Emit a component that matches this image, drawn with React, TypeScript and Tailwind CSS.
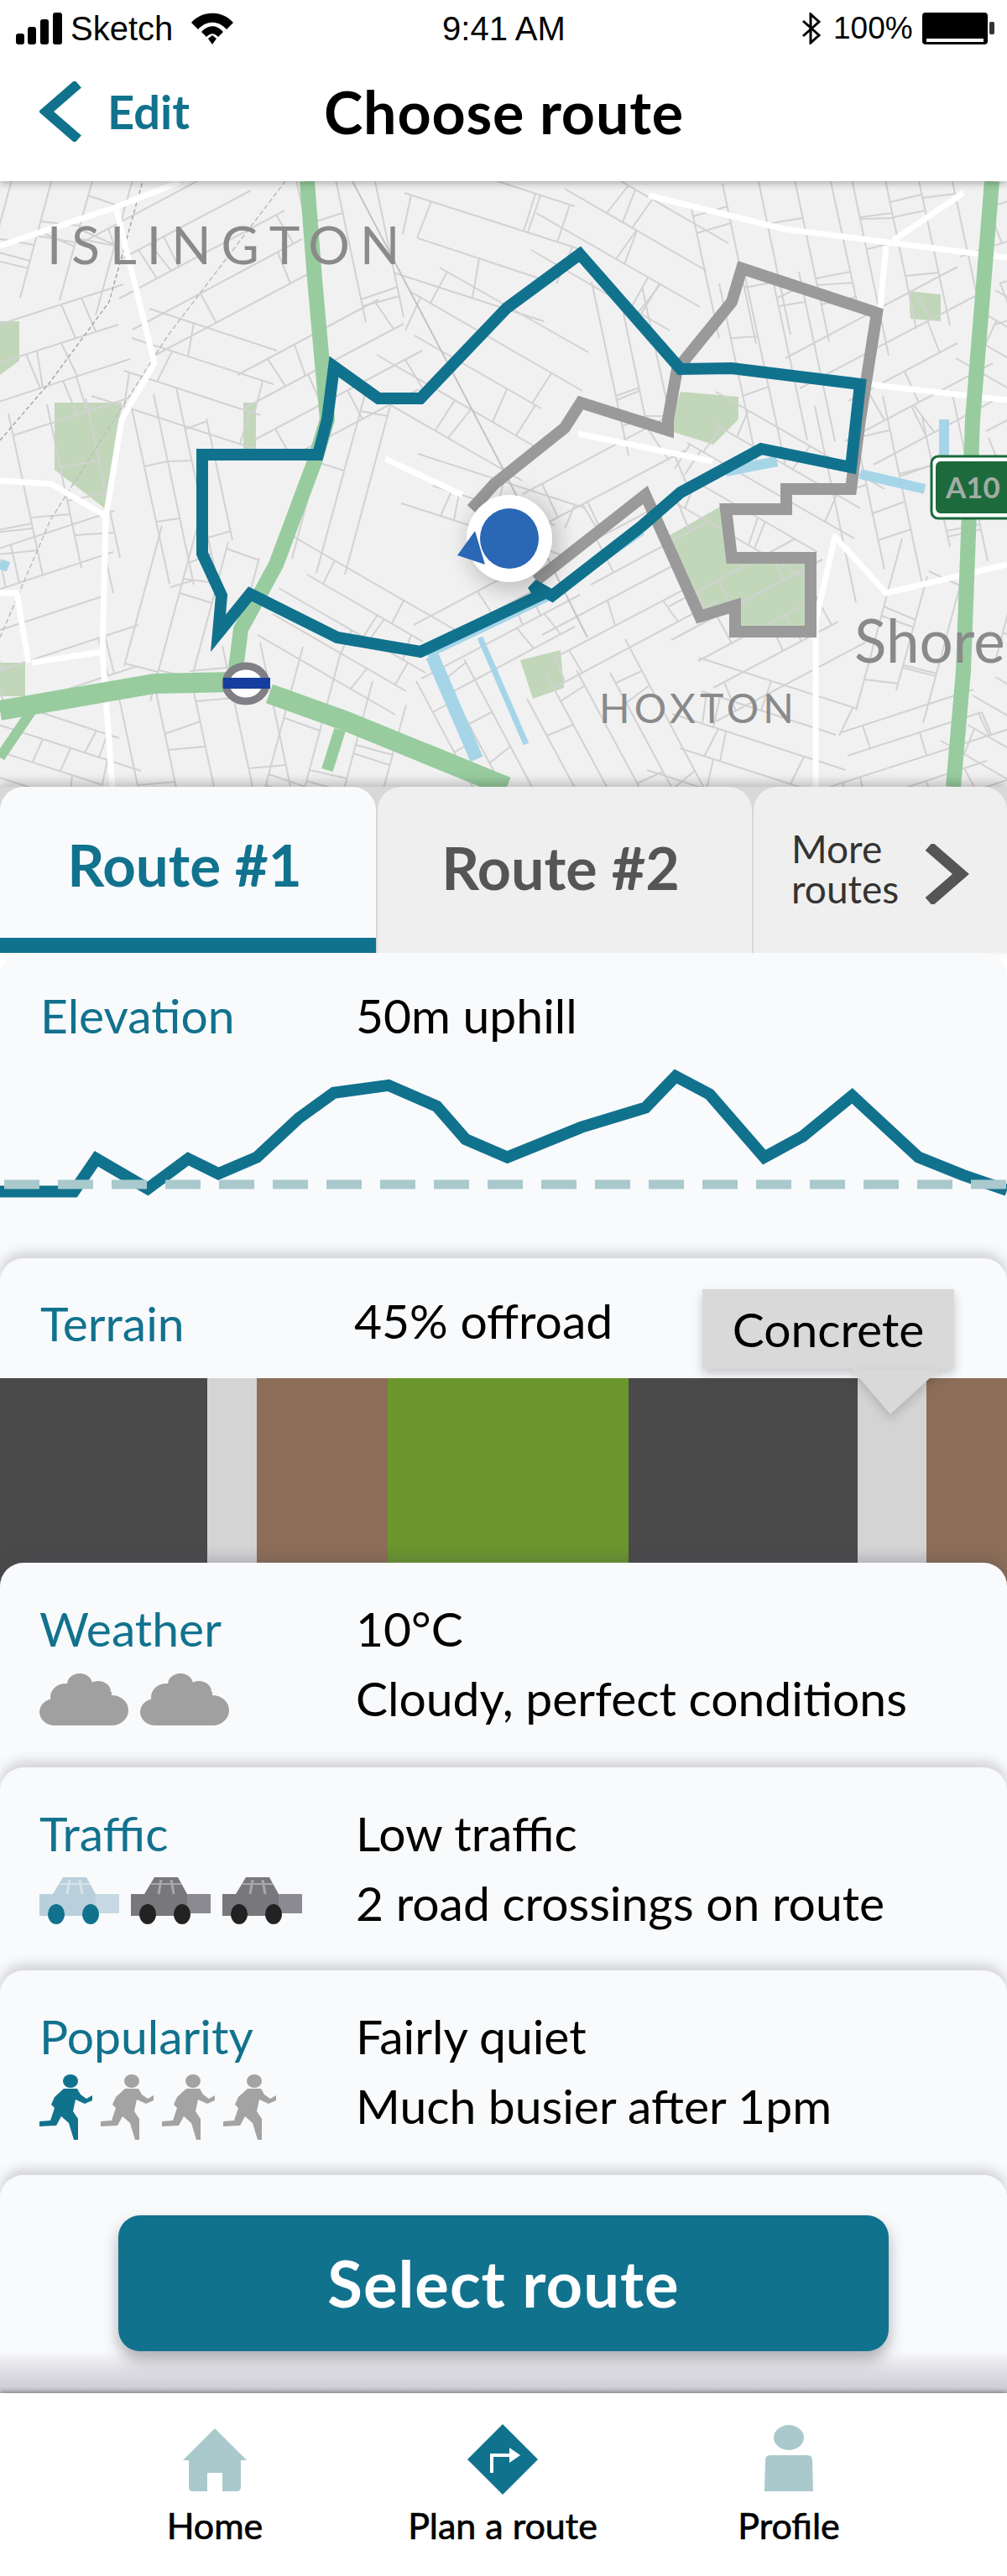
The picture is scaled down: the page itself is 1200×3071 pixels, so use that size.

import React from "react";

const TEAL = "#11728e";
const LIGHT = "#a9c9cd";

function rngFactory(seed: number) {
  let s = seed;
  return () => {
    s = (s * 1664525 + 1013904223) % 4294967296;
    return s / 4294967296;
  };
}

const streets: string[] = (() => {
  const r = rngFactory(98765);
  const angles = [-28, 62, 18, 78, 105, -18, 68, 30];
  const out: string[] = [];
  const cw = 170;
  const ch = 150;
  for (let cy = 216; cy < 938; cy += ch) {
    for (let cx = -20; cx < 1200; cx += cw) {
      const th = (angles[Math.floor(r() * angles.length)] * Math.PI) / 180;
      const ux = Math.cos(th);
      const uy = Math.sin(th);
      const vx = -uy;
      const vy = ux;
      const mx = cx + cw / 2 + (r() - 0.5) * 30;
      const my = cy + ch / 2 + (r() - 0.5) * 30;
      const n = 3 + Math.floor(r() * 3);
      const gap = 26 + r() * 22;
      for (let i = 0; i < n; i++) {
        const off = (i - (n - 1) / 2) * gap;
        const half = 70 + r() * 50;
        const ax = mx + vx * off - ux * half;
        const ay = my + vy * off - uy * half;
        const bx = mx + vx * off + ux * half;
        const by = my + vy * off + uy * half;
        out.push(`M${ax.toFixed(0)} ${ay.toFixed(0)}L${bx.toFixed(0)} ${by.toFixed(0)}`);
        if (i < n - 1) {
          const k = 1 + Math.floor(r() * 3);
          for (let j = 0; j < k; j++) {
            const t = (r() - 0.5) * 2 * half;
            const sx = mx + vx * off + ux * t;
            const sy = my + vy * off + uy * t;
            const skew = (r() - 0.5) * 14;
            out.push(
              `M${sx.toFixed(0)} ${sy.toFixed(0)}L${(sx + vx * gap + ux * skew).toFixed(0)} ${(sy + vy * gap + uy * skew).toFixed(0)}`
            );
          }
        }
      }
    }
  }
  return out;
})();

function MapDrawing() {
  return (
    <svg viewBox="0 216 1200 722" className="block w-full h-full">
      <rect x="0" y="216" width="1200" height="722" fill="#f1f1f2" />
      <g fill="#c2d7b9">
        <polygon points="65,480 145,480 130,610 65,560" />
        <polygon points="795,640 865,600 865,665 966,665 966,753 876,753 876,722 834,735" />
        <polygon points="811,467 880,473 880,500 850,530 796,513" />
        <polygon points="1083,347 1121,351 1121,383 1085,380" />
        <polygon points="0,383 23,383 23,430 0,447" />
        <polygon points="620,787 668,775 672,820 635,833" />
        <polygon points="0,790 30,790 30,830 0,830" />
        <polygon points="290,480 305,480 305,535 290,535" />
      </g>
      <g fill="none" stroke="#d2d2d3" strokeWidth="2">
        {streets.map((d, i) => (
          <path key={i} d={d} />
        ))}
      </g>
      <path d="M0 525L60 455L130 360L170 216" fill="none" stroke="#a8a8a8" strokeWidth="1.5" strokeDasharray="5 3" />
      <path d="M420 216L600 560L700 760" fill="none" stroke="#c4c4c4" strokeWidth="2" />
      <path d="M0 760L60 620L200 400L340 216" fill="none" stroke="#bdbdbd" strokeWidth="1.5" strokeDasharray="6 3" />
      <g fill="none" stroke="#ffffff" strokeWidth="7" strokeLinejoin="round">
        <path d="M773 233L934 273L1200 307" />
        <path d="M0 293L138 247L214 217" />
        <path d="M138 247L184 433L145 500L126 617L122 777L134 938" />
        <path d="M0 573L61 577L126 615" />
        <path d="M459 547L551 590" />
        <path d="M689 517L849 550" />
        <path d="M1064 287L1148 230" />
        <path d="M1056 293L1048 377" />
        <path d="M38 790L122 777" />
        <path d="M1025 457L1200 477" />
        <path d="M972 938L972 740L995 640L1056 707L1200 673" />
        <path d="M0 707L20 707L34 790" />
      </g>
      <g fill="none" stroke="#a6d5e8" strokeLinejoin="round">
        <path d="M1125 500L1125 543" strokeWidth="12" />
        <path d="M1025 565L1102 583" strokeWidth="12" />
        <path d="M926 550L865 562" strokeWidth="12" />
        <path d="M765 633L650 713L509 780" strokeWidth="10" />
        <path d="M515 782L568 905" strokeWidth="16" />
        <path d="M572 760L627 887" strokeWidth="7" />
        <path d="M0 672L10 676" strokeWidth="12" />
      </g>
      <g fill="none" stroke="#98cc9e" strokeLinejoin="round" strokeLinecap="butt">
        <path d="M366 216L375 333L390 500L375 550L329 673L287 750L279 813" strokeWidth="18" />
        <path d="M1182 216L1159 500L1148 800L1136 938" strokeWidth="18" />
        <path d="M0 847L184 815L279 813" strokeWidth="24" />
        <path d="M321 827L413 860L604 938" strokeWidth="24" />
        <path d="M405 870L390 918" strokeWidth="14" />
        <path d="M38 847L0 903" strokeWidth="12" />
      </g>
      <ellipse cx="293" cy="815" rx="24" ry="21" fill="#ffffff" stroke="#7f7f85" strokeWidth="9" />
      <rect x="266" y="808" width="56" height="13" fill="#143d9e" />
      <polyline
        points="562,607 589,577 673,510 692,480 796,513 796,500 807,440 872,360 884,320 1045,373 1025,500 1014,583 937,583 937,607 865,607 872,665 966,665 966,753 876,753 876,722 834,735 769,590 639,692"
        fill="none"
        stroke="#9a9a9a"
        strokeWidth="14"
        strokeLinejoin="miter"
      />
      <polygon
        points="691,303 811,440 872,439 1025,458 1014,557 907,535 811,587 765,627 658,710 635,697 643,710 501,777 402,760 298,708 260,755 264,710 241,660 241,542 379,542 390,500 398,437 451,475 501,475 604,367"
        fill="none"
        stroke={TEAL}
        strokeWidth="14"
        strokeLinejoin="miter"
      />
      <g fontFamily="Lato, sans-serif" fill="#8a8a8a">
        <text x="56" y="315" fontSize="62" letterSpacing="12">ISLINGTON</text>
        <text x="714" y="862" fontSize="48" letterSpacing="5">HOXTON</text>
        <text x="1018" y="790" fontSize="71">Shore</text>
      </g>
      <rect x="1110" y="544" width="110" height="74" rx="8" fill="#ffffff" stroke="#1d6a3c" strokeWidth="3" />
      <rect x="1115" y="550" width="110" height="62" rx="6" fill="#1d6a3c" />
      <text x="1127" y="594" fontFamily="Lato, sans-serif" fontWeight="700" fontSize="35" fill="#a2ada4">A10</text>
      <defs>
        <filter id="ms" x="-50%" y="-50%" width="200%" height="200%">
          <feGaussianBlur stdDeviation="14" />
        </filter>
      </defs>
      <ellipse cx="612" cy="648" rx="54" ry="56" fill="#000" opacity="0.22" filter="url(#ms)" />
      <ellipse cx="607" cy="642" rx="51" ry="52" fill="#ffffff" />
      <polygon points="545,662 566,633 578,673" fill="#2a67b5" />
      <ellipse cx="607" cy="642" rx="35" ry="36" fill="#2a67b5" />
    </svg>
  );
}

const elevPts = [
  [0, 1345], [115, 1345], [150, 1235], [230, 1335], [293, 1235], [340, 1285], [400, 1230], [465, 1100], [520, 1015], [605, 990],
  [680, 1060], [725, 1170], [790, 1230], [905, 1130], [1005, 1065], [1052, 960], [1105, 1020], [1190, 1230], [1250, 1160],
  [1327, 1025], [1430, 1230], [1500, 1290], [1568, 1340],
]
  .map(([x, y]) => `${(x / 1.3067).toFixed(1)},${((y - 548) / 2.8).toFixed(1)}`)
  .join(" ");

function Elevation() {
  return (
    <svg viewBox="0 0 1200 392" className="absolute left-0 top-0 w-full h-full">
      <polyline points={elevPts} fill="none" stroke={TEAL} strokeWidth="14" strokeLinejoin="miter" />
      <line x1="5" y1="276" x2="1200" y2="276" stroke="#a9c9cd" strokeWidth="11" strokeDasharray="42 22" />
    </svg>
  );
}

function Cloud() {
  return (
    <svg width="106" height="62" viewBox="0 0 106 62" fill="#a0a0a0">
      <ellipse cx="48" cy="13" rx="15" ry="13" />
      <ellipse cx="31" cy="28" rx="18" ry="16" />
      <ellipse cx="70" cy="22" rx="15" ry="13" />
      <ellipse cx="18" cy="46" rx="18" ry="16" />
      <ellipse cx="86" cy="44" rx="20" ry="18" />
      <rect x="18" y="22" width="68" height="40" />
    </svg>
  );
}

function Car({ body, rear, wheel, win }: { body: string; rear: string; wheel: string; win: string }) {
  return (
    <svg width="95" height="56" viewBox="0 0 95 56">
      <rect x="67" y="20" width="28" height="23" fill={rear} />
      <polygon points="28,0 56,0 67,20 67,46 0,46 0,20 16,20" fill={body} />
      <line x1="36" y1="3" x2="33" y2="20" stroke={win} strokeWidth="3" />
      <line x1="48" y1="3" x2="51" y2="20" stroke={win} strokeWidth="3" />
      <line x1="24" y1="8" x2="60" y2="8" stroke={win} strokeWidth="2" />
      <ellipse cx="20" cy="44" rx="10" ry="12" fill={wheel} />
      <ellipse cx="61" cy="44" rx="10" ry="12" fill={wheel} />
    </svg>
  );
}

function Runner({ color }: { color: string }) {
  return (
    <svg width="63" height="79" viewBox="0 0 63 79" fill={color}>
      <ellipse cx="37" cy="8" rx="9" ry="8" />
      <polygon points="29,17 45,17 49,24 56,29 63,25 63,31 54,35 43,30 40,44 46,53 46,78 41,78 35,58 26,50 20,61 0,62 0,56 13,55 18,40 14,36 18,27" />
    </svg>
  );
}

function Row({ label, l1, l2, icons, h, iconMt }: { label: string; l1: string; l2: string; icons: React.ReactNode; h: string; iconMt: string }) {
  return (
    <section className={`relative -mt-[28px] rounded-t-[28px] bg-[#f9fafc] shadow-[0_-7px_14px_rgba(70,70,90,0.22)] ${h}`}>
      <div className="flex pl-[47px] pt-[50px]">
        <div className="w-[377px] shrink-0">
          <div className="text-[57px] leading-[56px] text-[#11728e]">{label}</div>
          <div className={`flex gap-[14px] ${iconMt}`}>{icons}</div>
        </div>
        <div className="text-[57px] leading-[83px] text-black -mt-[13px] whitespace-nowrap">
          <div>{l1}</div>
          <div>{l2}</div>
        </div>
      </div>
    </section>
  );
}

const navLabel = "text-[43px] text-black leading-[48px] [-webkit-text-stroke:0.7px_black] whitespace-nowrap";

export default function App() {
  return (
    <div className="relative w-[1200px] h-[3071px] overflow-hidden bg-white font-['Lato',sans-serif] flex flex-col">
      <header className="relative z-20 h-[216px] shrink-0 bg-white shadow-[0_3px_8px_rgba(0,0,0,0.28)]">
        <div className="flex items-center h-[68px] font-['Liberation_Sans',sans-serif] text-[40px] text-black">
          <svg width="56" height="38" viewBox="0 0 56 38" className="ml-[19px]" fill="#000">
            <rect x="0" y="25" width="10" height="13" rx="3" />
            <rect x="14" y="17" width="10" height="21" rx="3" />
            <rect x="29" y="8" width="10" height="30" rx="3" />
            <rect x="44" y="0" width="11" height="38" rx="3" />
          </svg>
          <span className="ml-[9px] w-[144px]">Sketch</span>
          <svg width="50" height="38" viewBox="0 0 50 38">
            <path d="M0 12C13 -3 37 -3 50 12L42 20C32 9 18 9 8 20Z" fill="#000" />
            <path d="M12 23C20 14 30 14 38 23L32 29C27 24 23 24 18 29Z" fill="#000" />
            <path d="M20 31L25 27L30 31L25 38Z" fill="#000" />
          </svg>
          <span className="ml-[246px] w-[153px] text-center whitespace-nowrap">9:41 AM</span>
          <svg width="24" height="38" viewBox="0 0 24 38" className="ml-[278px]" fill="none" stroke="#000" strokeWidth="3">
            <path d="M2 10L21 27L11 36L11 2L21 11L2 28" />
          </svg>
          <span className="ml-[14px] w-[105px] text-[37px]">100%</span>
          <svg width="88" height="40" viewBox="0 0 88 40">
            <rect x="1" y="1" width="78" height="38" rx="4" fill="#000" />
            <rect x="6" y="32" width="68" height="4" fill="#fff" />
            <rect x="81" y="12" width="6" height="15" rx="2" fill="#333" />
          </svg>
        </div>
        <div className="flex items-center h-[74px] mt-[28px]">
          <svg width="50" height="72" viewBox="0 0 50 72" className="ml-[47px]" fill="none" stroke={TEAL} strokeWidth="12">
            <path d="M46 3L8 36L46 69" />
          </svg>
          <span className="ml-[31px] w-[258px] text-[56px] font-bold text-[#11728e]">Edit</span>
          <span className="text-[70px] font-bold text-black tracking-[0.8px] whitespace-nowrap">Choose route</span>
        </div>
      </header>

      <div className="h-[722px] shrink-0">
        <MapDrawing />
      </div>

      <nav className="relative z-10 flex h-[198px] shrink-0 gap-[2px] bg-[#d8d8d8] shadow-[0_-5px_12px_rgba(0,0,0,0.22)]">
        <div className="w-[448px] rounded-t-[28px] bg-[#f9fafc] border-b-[18px] border-[#11728e] flex items-center justify-center pt-[6px] pr-[8px]">
          <span className="text-[69px] font-bold text-[#11728e] whitespace-nowrap">Route #1</span>
        </div>
        <div className="w-[446px] rounded-t-[28px] bg-[#efefef] flex items-center justify-center pb-[6px] pr-[10px]">
          <span className="text-[70px] font-bold text-[#555555] whitespace-nowrap">Route #2</span>
        </div>
        <div className="flex-1 rounded-t-[28px] bg-[#efefef] flex items-start pt-[50px] pl-[45px]">
          <div className="text-[46px] leading-[48px] text-[#333333] w-[160px]">
            More
            <br />
            routes
          </div>
          <svg width="52" height="72" viewBox="0 0 52 72" fill="none" stroke="#555555" strokeWidth="13" className="mt-[18px]">
            <path d="M4 3L42 36L4 69" />
          </svg>
        </div>
      </nav>

      <section className="relative z-10 h-[392px] shrink-0 rounded-t-[28px] bg-[#f9fafc]">
        <div className="flex pl-[48px] pt-[44px] text-[57px] leading-[60px]">
          <span className="w-[376px] text-[#11728e]">Elevation</span>
          <span className="text-black">50m uphill</span>
        </div>
        <Elevation />
      </section>

      <section className="relative z-10 -mt-[28px] h-[391px] shrink-0 rounded-t-[28px] bg-[#f9fafc] shadow-[0_-7px_14px_rgba(70,70,90,0.22)]">
        <div className="flex pl-[48px] pt-[47px] text-[57px] leading-[60px] h-[143px]">
          <span className="w-[374px] text-[#11728e]">Terrain</span>
          <span className="-mt-[3px] text-black">45% offroad</span>
        </div>
        <div className="flex h-[248px]">
          <div className="w-[247px] bg-[#4a4a4a]" />
          <div className="w-[59px] bg-[#d4d4d4]" />
          <div className="w-[156px] bg-[#8c6e58]" />
          <div className="w-[287px] bg-[#6b962e]" />
          <div className="w-[273px] bg-[#4a4a4a]" />
          <div className="w-[82px] bg-[#d4d4d4]" />
          <div className="flex-1 bg-[#8c6e58]" />
        </div>
        <div className="absolute left-[837px] top-[37px] flex h-[95px] w-[300px] items-center justify-center bg-[#d9d9d9] text-[57px] text-black shadow-[0_6px_12px_rgba(0,0,0,0.2)]">
          Concrete
        </div>
        <svg width="105" height="54" viewBox="0 0 105 54" className="absolute left-[1015px] top-[132px] drop-shadow-[0_6px_6px_rgba(0,0,0,0.15)]">
          <polygon points="0,0 105,0 46,54" fill="#d9d9d9" />
        </svg>
      </section>

      <div className="relative z-10 flex flex-col shrink-0">
        <Row
          label="Weather"
          l1="10°C"
          l2="Cloudy, perfect conditions"
          h="h-[272px]"
          iconMt="mt-[26px]"
          icons={
            <>
              <Cloud />
              <Cloud />
            </>
          }
        />
        <Row
          label="Traffic"
          l1="Low traffic"
          l2="2 road crossings on route"
          h="h-[270px]"
          iconMt="mt-[25px]"
          icons={
            <>
              <Car body="#b9d0dc" rear="#c6d9e2" wheel="#11728e" win="#d6e4ea" />
              <Car body="#77777c" rear="#8a8a90" wheel="#222222" win="#a9a9ad" />
              <Car body="#77777c" rear="#8a8a90" wheel="#222222" win="#a9a9ad" />
            </>
          }
        />
        <Row
          label="Popularity"
          l1="Fairly quiet"
          l2="Much busier after 1pm"
          h="h-[272px]"
          iconMt="mt-[18px]"
          icons={
            <>
              <Runner color="#11728e" />
              <span className="-ml-[4px]"><Runner color="#a3a3a3" /></span>
              <span className="-ml-[4px]"><Runner color="#a3a3a3" /></span>
              <span className="-ml-[4px]"><Runner color="#a3a3a3" /></span>
            </>
          }
        />
        <section className="relative -mt-[28px] h-[260px] rounded-t-[28px] bg-[linear-gradient(#f9fafc_0,#f9fafc_210px,#dcdce2_235px,#c9c9cf_260px)] shadow-[0_-7px_14px_rgba(70,70,90,0.22)] pt-[48px] flex justify-center">
          <button className="h-[162px] w-[918px] rounded-[26px] bg-[#11728e] text-[76px] font-bold tracking-[1px] text-white shadow-[0_10px_18px_rgba(60,60,70,0.4)]">
            Select route
          </button>
        </section>
      </div>

      <footer className="relative z-20 flex-1 bg-white shadow-[0_-2px_5px_rgba(0,0,0,0.35)]">
        <div className="flex">
          <div className="absolute left-[156px] top-[40px] flex w-[200px] flex-col items-center">
            <svg width="78" height="78" viewBox="0 0 78 78" fill={LIGHT}>
              <path d="M39 2L77 40L70 40L70 72Q70 77 65 77L48 77L48 55L30 55L30 77L13 77Q8 77 8 72L8 40L1 40Z" />
            </svg>
            <span className={`mt-[16px] ${navLabel}`}>Home</span>
          </div>
          <div className="absolute left-[449px] top-[40px] flex w-[300px] flex-col items-center">
            <svg width="84" height="84" viewBox="0 0 84 84" className="-mt-[3px]">
              <polygon points="42,0 84,42 42,84 0,42" fill={TEAL} />
              <path d="M29 58L29 37L52 37" fill="none" stroke="#fff" strokeWidth="4" />
              <polygon points="50,28 63,37 50,46" fill="#fff" />
            </svg>
            <span className={`mt-[13px] ${navLabel}`}>Plan a route</span>
          </div>
          <div className="absolute left-[840px] top-[40px] flex w-[200px] flex-col items-center">
            <svg width="60" height="80" viewBox="0 0 60 80" fill={LIGHT} className="-mt-[2px]">
              <ellipse cx="30" cy="15" rx="18" ry="15" />
              <path d="M8 36L52 36Q58 36 58 42L59 79L1 79L2 42Q2 36 8 36Z" />
            </svg>
            <span className={`mt-[16px] ${navLabel}`}>Profile</span>
          </div>
        </div>
      </footer>
    </div>
  );
}
